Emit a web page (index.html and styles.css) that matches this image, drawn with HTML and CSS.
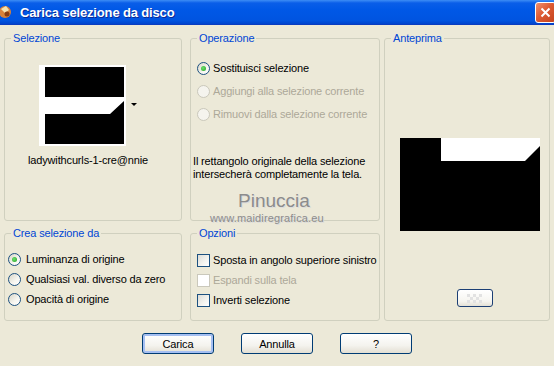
FILE: index.html
```html
<!DOCTYPE html>
<html lang="it">
<head>
    <meta charset="UTF-8">
    <title>Carica selezione da disco</title>
    <link rel="stylesheet" href="styles.css">
</head>
<body>

<div class="titlebar">
    <svg class="app-icon" width="16" height="16" viewBox="0 0 16 16">
        <circle cx="7" cy="8" r="6" fill="#d9823a"/>
        <path d="M3 5 L8 2 L11 6 L7 9 Z" fill="#f6e3b0"/>
        <circle cx="9" cy="10" r="2.5" fill="#8a3d12"/>
    </svg>
    <span class="title">Carica selezione da disco</span>
    <span class="close">
        <svg width="11" height="11" viewBox="0 0 11 11">
            <path d="M1.5 1.5 L9.5 9.5 M9.5 1.5 L1.5 9.5" stroke="#fff" stroke-width="2"/>
        </svg>
    </span>
</div>

<div class="panels">
    <fieldset class="group sel">
        <legend>Selezione</legend>
        <div class="thumb-row">
            <svg width="87" height="81" viewBox="0 0 87 81">
                <rect width="87" height="81" fill="#fff"/>
                <rect x="6" y="2" width="79" height="30" fill="#000"/>
                <polygon points="6,49 71,49 85,36 85,79 6,79" fill="#000"/>
            </svg>
            <span class="drop-arrow"></span>
        </div>
        <div class="file-name">ladywithcurls-1-cre@nnie</div>
    </fieldset>

    <fieldset class="group op">
        <legend>Operazione</legend>
        <div class="choices">
            <div class="option"><span class="radio checked"></span>Sostituisci selezione</div>
            <div class="option disabled"><span class="radio"></span>Aggiungi alla selezione corrente</div>
            <div class="option disabled"><span class="radio"></span>Rimuovi dalla selezione corrente</div>
        </div>
        <p class="note">Il rettangolo originale della selezione<br>intersecherà completamente la tela.</p>
    </fieldset>

    <fieldset class="group preview-box">
        <legend>Anteprima</legend>
        <svg class="preview" width="140" height="93" viewBox="0 0 140 93">
            <rect width="140" height="93" fill="#000"/>
            <polygon points="41,0 140,0 140,8 125,23 41,23" fill="#fff"/>
        </svg>
        <button class="mini">
            <svg width="20" height="9" viewBox="0 0 20 9">
                <g fill="#e2e2e2">
                    <rect x="2" y="0" width="3" height="3"/><rect x="8" y="0" width="3" height="3"/><rect x="14" y="0" width="3" height="3"/>
                    <rect x="5" y="3" width="3" height="3"/><rect x="11" y="3" width="3" height="3"/>
                    <rect x="2" y="6" width="3" height="3"/><rect x="8" y="6" width="3" height="3"/><rect x="14" y="6" width="3" height="3"/>
                </g>
            </svg>
        </button>
    </fieldset>

    <fieldset class="group crea">
        <legend>Crea selezione da</legend>
        <div class="choices">
            <div class="option"><span class="radio checked"></span>Luminanza di origine</div>
            <div class="option"><span class="radio"></span>Qualsiasi val. diverso da zero</div>
            <div class="option"><span class="radio"></span>Opacità di origine</div>
        </div>
    </fieldset>

    <fieldset class="group opz">
        <legend>Opzioni</legend>
        <div class="choices">
            <div class="option"><span class="check"></span>Sposta in angolo superiore sinistro</div>
            <div class="option disabled"><span class="check"></span>Espandi sulla tela</div>
            <div class="option"><span class="check"></span>Inverti selezione</div>
        </div>
    </fieldset>

    <div class="watermark">
        <div class="wm-name">Pinuccia</div>
        <div class="wm-url">www.maidiregrafica.eu</div>
    </div>
</div>

<div class="buttons">
    <button class="btn default">Carica</button>
    <button class="btn">Annulla</button>
    <button class="btn">?</button>
</div>

</body>
</html>
```

FILE: styles.css
```css
body {
    margin: 0;
    width: 554px;
    height: 366px;
    overflow: hidden;
    background: #ece9d8;
    font-family: "Liberation Sans", Arial, sans-serif;
    font-size: 11px;
    letter-spacing: -0.15px;
    color: #000;
}
.titlebar {
    height: 25px;
    box-sizing: border-box;
    display: flex;
    align-items: center;
    background: linear-gradient(#3d8df5 0, #0a5ee8 3px, #0058e6 40%, #0054e0 85%, #0044cc 100%);
    border-bottom: 1px solid #0a3cc0;
    color: #fff;
}
.app-icon {
    margin-left: -2px;
    margin-right: 6px;
}
.title {
    flex: 1;
    font-size: 13px;
    font-weight: bold;
    text-shadow: 1px 1px 0 #0b2a96;
}
.close {
    width: 21px;
    height: 21px;
    box-sizing: border-box;
    margin-right: -2px;
    border: 1px solid #fff;
    border-radius: 3px;
    background: linear-gradient(135deg, #f09070, #dd5a32 45%, #c4421c);
    display: flex;
    align-items: center;
    justify-content: center;
}
.panels {
    position: relative;
    display: grid;
    grid-template-columns: 178px 8px 190px 4px 166px;
    grid-template-rows: 189px 94px;
    row-gap: 6px;
    padding: 7px 4px 0;
}
.group {
    margin: 0;
    padding: 0;
    min-width: 0;
    border: 1px solid #d0d0bf;
    border-radius: 3px;
}
.group legend {
    margin-left: 6px;
    padding: 0 2px;
    line-height: 13px;
    color: #0046d5;
}
.sel { grid-column: 1; grid-row: 1; }
.op { grid-column: 3; grid-row: 1; }
.preview-box { grid-column: 5; grid-row: 1 / 3; }
.crea { grid-column: 1; grid-row: 2; }
.opz { grid-column: 3; grid-row: 2; }

.thumb-row {
    display: flex;
    align-items: center;
    gap: 5px;
    padding: 20px 0 0 34px;
}
.drop-arrow {
    width: 0;
    height: 0;
    margin-top: -3px;
    border-left: 3px solid transparent;
    border-right: 3px solid transparent;
    border-top: 3px solid #000;
}
.file-name {
    margin-top: 8px;
    padding-left: 23px;
    line-height: 13px;
}

.choices {
    display: flex;
    flex-direction: column;
}
.op .choices {
    gap: 7px;
    padding: 15px 0 0 6px;
}
.crea .choices {
    gap: 4px;
    padding: 11px 0 0 3px;
}
.opz .choices {
    gap: 4px;
    padding: 12px 0 0 6px;
}
.option {
    display: flex;
    align-items: center;
    gap: 3px;
    height: 16px;
    white-space: nowrap;
}
.crea .option {
    gap: 5px;
}
.option.disabled {
    color: #aca899;
}
.radio {
    position: relative;
    width: 13px;
    height: 13px;
    box-sizing: border-box;
    flex: none;
    border: 1px solid #1c5180;
    border-radius: 50%;
    background: linear-gradient(135deg, #d8d5c8, #f7f6f1 60%, #fff);
}
.radio.checked::after {
    content: "";
    position: absolute;
    left: 3px;
    top: 3px;
    width: 5px;
    height: 5px;
    border-radius: 50%;
    background: radial-gradient(circle at 40% 40%, #6ee06e, #21a121);
}
.disabled .radio {
    border-color: #cac8bb;
    background: #f5f4ee;
}
.check {
    width: 13px;
    height: 13px;
    box-sizing: border-box;
    flex: none;
    border: 1px solid #1c5180;
    background: linear-gradient(135deg, #dcdcd7, #f4f4f0 60%, #fff);
}
.disabled .check {
    border-color: #cac8bb;
    background: #fff;
}
.note {
    margin: 33px 0 0 2px;
    line-height: 13px;
}

.preview {
    display: block;
    margin: 93px 0 0 15px;
}
.mini {
    display: flex;
    align-items: center;
    justify-content: center;
    width: 36px;
    height: 18px;
    margin: 58px 0 0 72px;
    padding: 0;
    box-sizing: border-box;
    border: 1px solid #1c3f74;
    border-radius: 3px;
    background: linear-gradient(#fff, #f6f5f0 70%, #e4e1d6);
}

/* watermark sits on top of the dialog */
.watermark {
    position: absolute;
    left: 210px;
    top: 166px;
    color: #8c8c8c;
    letter-spacing: 0;
    text-shadow: 1px 1px 0 #dcdcdc;
}
.wm-name {
    padding-left: 28px;
    font-size: 19px;
    line-height: 20px;
}
.wm-url {
    font-size: 11px;
    line-height: 14px;
    letter-spacing: 0.15px;
}

.buttons {
    display: flex;
    justify-content: center;
    gap: 27px;
    margin-top: 12px;
}
.btn {
    width: 72px;
    height: 21px;
    padding: 0;
    box-sizing: border-box;
    border: 1px solid #003c74;
    border-radius: 3px;
    background: linear-gradient(#fff, #f4f3ee 60%, #e3dfd3);
    font: inherit;
    letter-spacing: -0.15px;
    color: #000;
}
.btn.default {
    box-shadow: inset 0 0 0 2px #a5bff2;
}
```
